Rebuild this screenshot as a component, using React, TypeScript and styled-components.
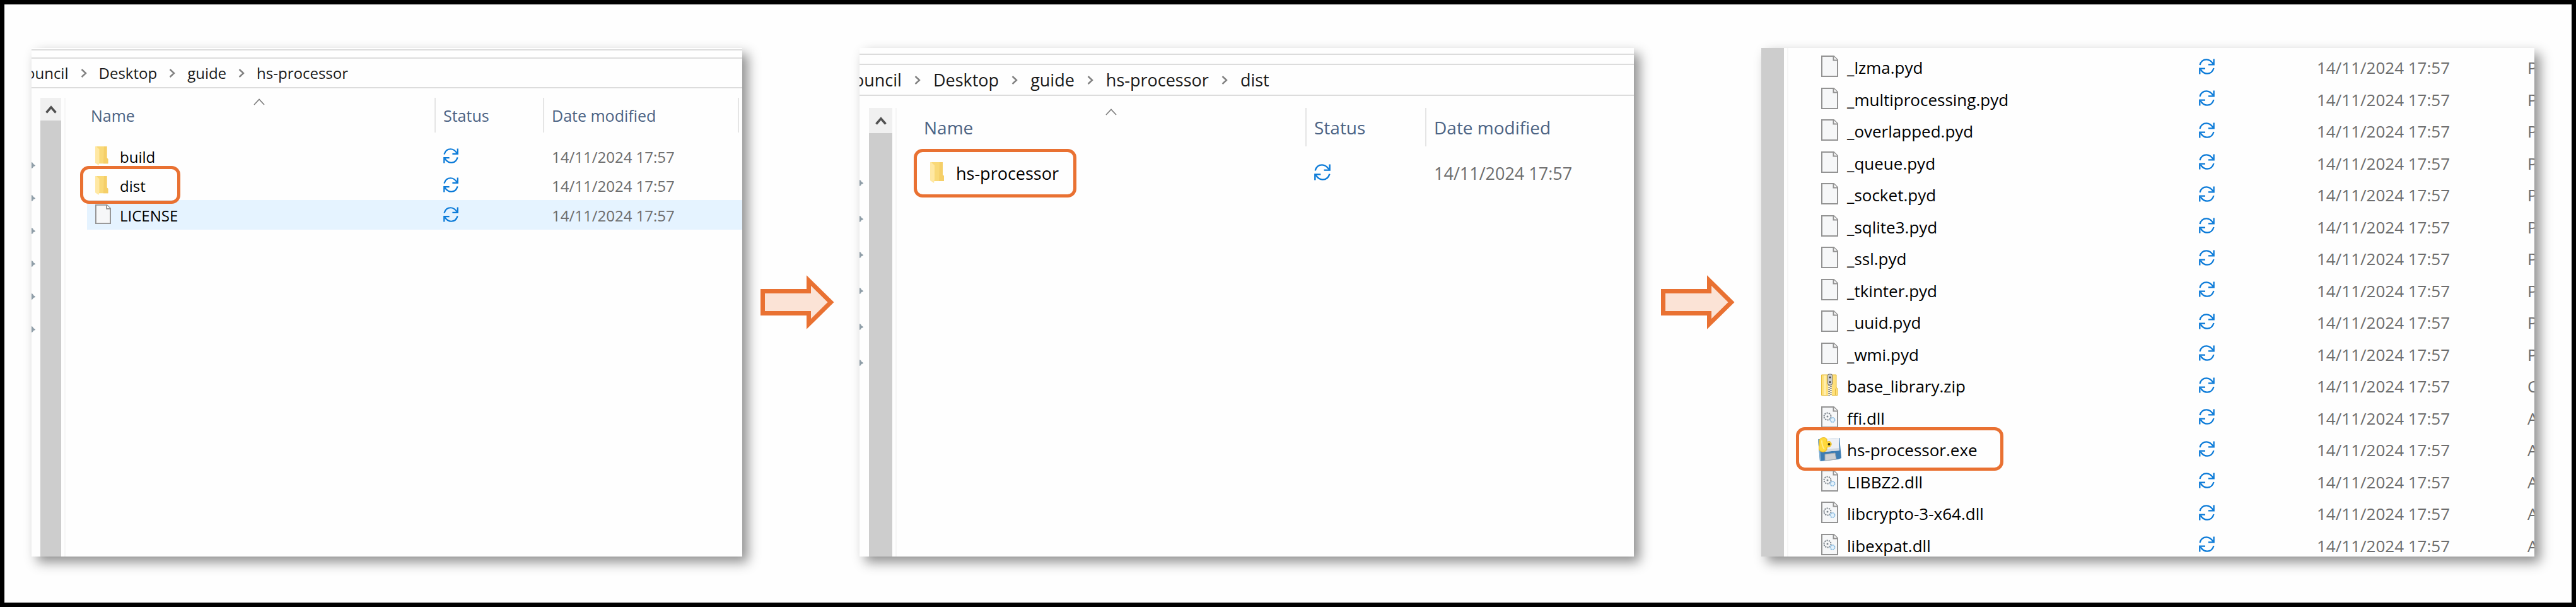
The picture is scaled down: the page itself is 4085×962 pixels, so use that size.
import React from "react";
import styled, { createGlobalStyle } from "styled-components";

const GlobalStyle = createGlobalStyle`
  *, *::before, *::after { box-sizing: border-box; }
  body {
    margin: 0;
    background: #fff;
    font-family: "Open Sans", "Noto Sans", sans-serif;
  }
`;

const Frame = styled.main`
  display: grid;
  grid-template-columns: minmax(0, 1127fr) 186px minmax(0, 1228fr) 202px minmax(0, 1226fr);
  grid-template-rows: minmax(0, 1fr);
  height: 100vh;
  padding: 69px 59px 73px 43px;
  border: 7px solid #000;
  background: #fefefe;
`;

const Panel = styled.section<{ $size: number }>`
  display: flex;
  flex-direction: column;
  min-width: 0;
  overflow: hidden;
  background: #fefefe;
  box-shadow: 9px 9px 18px rgba(0, 0, 0, 0.44);
  font-size: ${(p) => p.$size}px;
  line-height: 34px;
`;

const TopEdge = styled.div<{ $before: number; $height: number }>`
  flex: none;
  height: ${(p) => p.$height}px;
  margin-top: ${(p) => p.$before}px;
  border-top: 2px solid #dcdcdc;
`;

const AddressBar = styled.nav<{ $height: number; $gap: number }>`
  flex: none;
  display: flex;
  align-items: center;
  gap: ${(p) => p.$gap}px;
  height: ${(p) => p.$height}px;
  padding-right: 20px;
  border-top: 2px solid #dcdcdc;
  border-bottom: 2px solid #dcdcdc;
  white-space: nowrap;
`;

const Crumb = styled.a`
  color: #1a1a1a;
  text-decoration: none;

  &:first-child {
    margin-left: -9px;
  }
`;

const Body = styled.div<{ $top: number }>`
  flex: 1;
  display: flex;
  min-height: 0;
  padding-top: ${(p) => p.$top}px;
`;

const PinStrip = styled.div<{ $width: number; $top: number; $gap: number }>`
  flex: none;
  display: flex;
  flex-direction: column;
  gap: ${(p) => p.$gap}px;
  width: ${(p) => p.$width}px;
  padding-top: ${(p) => p.$top}px;
`;

const ScrollTrack = styled.div<{ $width: number }>`
  flex: none;
  display: flex;
  flex-direction: column;
  width: ${(p) => p.$width}px;
  background: #f0f0f0;
`;

const ScrollButton = styled.button<{ $height: number }>`
  display: flex;
  align-items: center;
  justify-content: center;
  height: ${(p) => p.$height}px;
  padding: 0;
  border: 0;
  background: #f0f0f0;
`;

const ScrollThumb = styled.div`
  flex: 1;
  background: #cdcdcd;
`;

const Divider = styled.div<{ $after: number }>`
  flex: none;
  width: 2px;
  margin: 0 ${(p) => p.$after}px 0 5px;
  background: #f6f6f6;
`;

const ListArea = styled.div<{ $top: number }>`
  flex: 1;
  min-width: 0;
  padding-top: ${(p) => p.$top}px;
`;

const FileTable = styled.table<{ $gap: number; $odd: number; $even: number }>`
  width: 100%;
  table-layout: fixed;
  border-collapse: separate;
  border-spacing: 0;
  white-space: nowrap;

  thead + tbody::before {
    content: "";
    display: block;
    height: ${(p) => p.$gap}px;
  }
  tbody tr:nth-child(odd) {
    height: ${(p) => p.$odd}px;
  }
  tbody tr:nth-child(even) {
    height: ${(p) => p.$even}px;
  }
`;

const Column = styled.col<{ $width?: number }>`
  width: ${(p) => (p.$width ? `${p.$width}px` : "auto")};
`;

const HeadCell = styled.th<{ $height: number; $size: number }>`
  position: relative;
  height: ${(p) => p.$height}px;
  padding: 0 0 0 12px;
  border-left: 2px solid #e5e5e5;
  color: #4c6384;
  font-size: ${(p) => p.$size}px;
  font-weight: 400;
  text-align: left;

  &:first-child {
    border-left-color: transparent;
  }
`;

const SortMark = styled.span`
  position: absolute;
  top: 1px;
  left: 50%;
  display: flex;
  transform: translateX(-50%);
`;

const Row = styled.tr<{ $hot?: boolean }>`
  td {
    background-color: ${(p) => (p.$hot ? "#e5f3ff" : "transparent")};
  }
`;

const Cell = styled.td`
  padding: 2px 0 0 14px;
  color: #6d6d6d;
`;

const NameCell = styled.td<{ $pad: number }>`
  position: relative;
  padding: 2px 0 0 ${(p) => p.$pad}px;
  border-left: 8px solid transparent;
  background-clip: padding-box;
  color: #000;
`;

const NameLine = styled.div`
  display: flex;
  align-items: center;
  gap: 14px;
`;

const IconSlot = styled.span<{ $width: number; $height: number }>`
  flex: none;
  display: flex;
  width: ${(p) => p.$width}px;
  height: ${(p) => p.$height}px;
  margin-bottom: 4px;

  svg {
    width: 100%;
    height: 100%;
    overflow: visible;
  }
`;

const SyncSlot = styled.span<{ $side: number }>`
  display: flex;
  width: ${(p) => p.$side}px;
  height: ${(p) => p.$side}px;
  margin-bottom: 4px;

  svg {
    width: 100%;
    height: 100%;
  }
`;

const Ring = styled.span<{ $left: number; $top: number; $width: number; $height: number }>`
  position: absolute;
  z-index: 1;
  left: ${(p) => p.$left}px;
  top: ${(p) => p.$top}px;
  width: ${(p) => p.$width}px;
  height: ${(p) => p.$height}px;
  border: 5px solid #e97132;
  border-radius: 14px;
  pointer-events: none;
`;

const ArrowSlot = styled.div<{ $shift: number }>`
  display: flex;
  align-items: center;
  padding-left: ${(p) => p.$shift}px;
`;

type Kind = "folder" | "file" | "zip" | "dll" | "exe";

const Page = () => (
  <>
    <path d="M1 1H20L26 7V33H1Z" fill="#f6f7f8" stroke="#939393" strokeWidth="2" />
    <path d="M19.500 1V7.500H26" fill="#fff" stroke="#939393" strokeWidth="2" />
  </>
);

const FileIcon = ({ kind }: { kind: Kind }) => {
  if (kind === "folder")
    return (
      <svg viewBox="0 0 27 34" preserveAspectRatio="none" aria-hidden="true">
        <path d="M2 1H20V21L22 23V31H6Z" fill="#f9d978" />
        <path d="M15 1H20V21L22 23V31H14Z" fill="#f5cf68" />
        <path d="M0 1H1.500L7 6V28L6 34L0 30Z" fill="#ffe8a3" />
      </svg>
    );
  if (kind === "file")
    return (
      <svg viewBox="0 0 27 34" preserveAspectRatio="none" aria-hidden="true">
        <Page />
      </svg>
    );
  if (kind === "dll")
    return (
      <svg viewBox="0 0 27 34" aria-hidden="true">
        <Page />
        <circle cx="10" cy="16" r="5.500" fill="none" stroke="#7d858c" strokeWidth="2" strokeDasharray="2.200 1.200" />
        <circle cx="10" cy="16" r="1.500" fill="#7d858c" />
        <circle cx="18" cy="21.500" r="3.600" fill="#e4f2fc" stroke="#8dbce0" strokeWidth="1.800" strokeDasharray="2.400 .8" />
      </svg>
    );
  if (kind === "zip")
    return (
      <svg viewBox="0 0 27 34" aria-hidden="true">
        <path d="M.5 1H24V21L26 23V33.500H.5Z" fill="#ffe07a" stroke="#e6bd3c" />
        <path d="M6 2V33" stroke="#fff0b4" strokeWidth="3" />
        <path d="M22.500 33V24L24 22" fill="none" stroke="#e2b73a" />
        <path d="M14 16V34" stroke="#fff6d8" strokeWidth="6" />
        <path d="M12.500 17V34M15.500 18.500V34" stroke="#555" strokeWidth="2" strokeDasharray="1.500 1.700" />
        <rect x="10.500" y="0" width="7" height="17" rx="2" fill="#c9cbcd" stroke="#777" />
        <circle cx="14" cy="5" r="1.500" fill="#333" />
        <circle cx="14" cy="12.500" r="1.500" fill="#333" />
      </svg>
    );
  return (
    <svg viewBox="0 0 27 34" aria-hidden="true">
      <path d="M-5 2L29 0L32 32L27 34L-2 37Z" fill="#3d7db3" />
      <path d="M-5 2L-3 2L0 36L-2 37Z" fill="#79abd1" />
      <path d="M3 1L28 0L29 20L5 22Z" fill="#eef0f4" />
      <path d="M5 18L29 16V20L5 22Z" fill="#d5dae1" />
      <path d="M6 26L22 24L24 34L6 36Z" fill="#cfd1d3" stroke="#9fa7ae" />
      <path
        d="M-3 4C-2 -1 7 -2 9 2V7C12 4 17 6 16 11C15 15 11 14 9 15C10 20 6 23 1 22C-4 21 -4 16 -3 12Z"
        fill="#ffd93b"
        stroke="#e9b71d"
      />
      <path d="M1 4C1 9 2 14 5 18" fill="none" stroke="#ffec8a" strokeWidth="2" />
      <circle cx="12.500" cy="10" r="2" fill="#3a3208" />
    </svg>
  );
};

const SyncIcon = () => (
  <svg viewBox="0 0 25 25" role="img" aria-label="Sync pending" fill="none" stroke="#0a7ad8" strokeWidth="2.300">
    <path d="M1.500 10C3 4.500 7 1.300 12 1.300C16 1.300 19.500 3.500 22.500 8" />
    <path d="M23.700 .5V9.300H15" />
    <path d="M23.500 15C22 20.500 18 23.700 13 23.700C9 23.700 5.500 21.500 2.500 17" />
    <path d="M1.300 24.500V15.700H10" />
  </svg>
);

const CrumbChevron = () => (
  <svg width="10" height="14" viewBox="0 0 10 14" aria-hidden="true">
    <path d="M1.500 1L8 7L1.500 13" fill="none" stroke="#808080" strokeWidth="2.400" />
  </svg>
);

const Pin = () => (
  <svg width="6" height="10" viewBox="0 0 6 10" aria-hidden="true">
    <path d="M0 0L2 1L3 3L6 5V6L3 7L2 9L0 10Z" fill="#8f9ea8" />
  </svg>
);

const BlockArrow = () => (
  <svg width="117" height="88" viewBox="0 0 117 88" role="img" aria-label="Next step">
    <path
      d="M3.500 26.500H76.500V9.500L111.500 44L76.500 78.500V61.500H3.500Z"
      fill="#fbe3d6"
      stroke="#e97132"
      strokeWidth="7"
      strokeMiterlimit="10"
    />
  </svg>
);

type Item = { name: string; kind: Kind; type?: string; hot?: boolean; ringed?: boolean };
type RingBox = { left: number; top: number; width: number; height: number };
type View = {
  label: string;
  size: number;
  address?: { before: number; edge: number; height: number; gap: number; path: string[] };
  bodyTop: number;
  pins?: { width: number; top: number; gap: number };
  scroll: { width: number; button?: number; after: number };
  list: { top: number; head?: number; gap: number; odd: number; even: number; columns: number[] };
  icon: { width: number; height: number; sync: number; pad: number };
  ring: RingBox;
  items: Item[];
};

const STAMP = "14/11/2024 17:57";

const views: View[] = [
  {
    label: "hs-processor folder",
    size: 24,
    address: { before: 2, edge: 13, height: 49, gap: 19, path: ["ouncil", "Desktop", "guide", "hs-processor"] },
    bodyTop: 15,
    pins: { width: 14, top: 102, gap: 42 },
    scroll: { width: 33, button: 36, after: 26 },
    list: { top: 0, head: 55, gap: 14, odd: 47, even: 46, columns: [172, 309, 7] },
    icon: { width: 25, height: 31, sync: 24, pad: 13 },
    ring: { left: -11, top: -8, width: 159, height: 60 },
    items: [
      { name: "build", kind: "folder" },
      { name: "dist", kind: "folder", ringed: true },
      { name: "LICENSE", kind: "file", hot: true },
    ],
  },
  {
    label: "dist folder",
    size: 27,
    address: { before: 9, edge: 16, height: 51, gap: 20, path: ["ouncil", "Desktop", "guide", "hs-processor", "dist"] },
    bodyTop: 19,
    pins: { width: 15, top: 114, gap: 47 },
    scroll: { width: 37, button: 40, after: 29 },
    list: { top: 0, head: 61, gap: 17, odd: 50, even: 51, columns: [190, 331] },
    icon: { width: 27, height: 34, sync: 26, pad: 16 },
    ring: { left: -10, top: -13, width: 258, height: 77 },
    items: [{ name: "hs-processor", kind: "folder", ringed: true }],
  },
  {
    label: "Program files",
    size: 26,
    bodyTop: 0,
    scroll: { width: 36, after: 28 },
    list: { top: 5, gap: 0, odd: 50, even: 51, columns: [187, 334, 25] },
    icon: { width: 27, height: 34, sync: 25, pad: 16 },
    ring: { left: -24, top: -10, width: 329, height: 69 },
    items: [
      { name: "_lzma.pyd", kind: "file", type: "P" },
      { name: "_multiprocessing.pyd", kind: "file", type: "P" },
      { name: "_overlapped.pyd", kind: "file", type: "P" },
      { name: "_queue.pyd", kind: "file", type: "P" },
      { name: "_socket.pyd", kind: "file", type: "P" },
      { name: "_sqlite3.pyd", kind: "file", type: "P" },
      { name: "_ssl.pyd", kind: "file", type: "P" },
      { name: "_tkinter.pyd", kind: "file", type: "P" },
      { name: "_uuid.pyd", kind: "file", type: "P" },
      { name: "_wmi.pyd", kind: "file", type: "P" },
      { name: "base_library.zip", kind: "zip", type: "C" },
      { name: "ffi.dll", kind: "dll", type: "A" },
      { name: "hs-processor.exe", kind: "exe", type: "A", ringed: true },
      { name: "LIBBZ2.dll", kind: "dll", type: "A" },
      { name: "libcrypto-3-x64.dll", kind: "dll", type: "A" },
      { name: "libexpat.dll", kind: "dll", type: "A" },
    ],
  },
];

const Explorer = ({ view }: { view: View }) => {
  const { address, pins, scroll, list, icon, ring } = view;
  const heads = ["Name", "Status", "Date modified", ""];
  const hasTail = list.columns.length > 2;
  return (
    <Panel $size={view.size} aria-label={view.label}>
      {address && (
        <>
          <TopEdge $before={address.before} $height={address.edge} />
          <AddressBar $height={address.height} $gap={address.gap} aria-label="Path">
            {address.path.map((part, i) => (
              <React.Fragment key={part}>
                {i > 0 && <CrumbChevron />}
                <Crumb href="#">{part}</Crumb>
              </React.Fragment>
            ))}
          </AddressBar>
        </>
      )}
      <Body $top={view.bodyTop}>
        {pins && (
          <PinStrip $width={pins.width} $top={pins.top} $gap={pins.gap}>
            {[0, 1, 2, 3, 4, 5].map((n) => (
              <Pin key={n} />
            ))}
          </PinStrip>
        )}
        <ScrollTrack $width={scroll.width}>
          {scroll.button && (
            <ScrollButton $height={scroll.button} type="button" aria-label="Scroll up">
              <svg width="18" height="13" viewBox="0 0 18 13" aria-hidden="true">
                <path d="M1.500 11.500L9 3L16.500 11.500" fill="none" stroke="#505050" strokeWidth="3.500" />
              </svg>
            </ScrollButton>
          )}
          <ScrollThumb />
        </ScrollTrack>
        <Divider $after={scroll.after} />
        <ListArea $top={list.top}>
          <FileTable $gap={list.gap} $odd={list.odd} $even={list.even}>
            <colgroup>
              <Column />
              {list.columns.map((w, i) => (
                <Column key={i} $width={w} />
              ))}
            </colgroup>
            {list.head && (
              <thead>
                <tr>
                  {heads.slice(0, list.columns.length + 1).map((title, i) => (
                    <HeadCell key={title} $height={list.head!} $size={view.size + 1} scope="col">
                      {title}
                      {i === 0 && (
                        <SortMark>
                          <svg width="18" height="11" viewBox="0 0 18 11" aria-hidden="true">
                            <path d="M1 10L9 1.500L17 10" fill="none" stroke="#7a7a7a" strokeWidth="1.600" />
                          </svg>
                        </SortMark>
                      )}
                    </HeadCell>
                  ))}
                </tr>
              </thead>
            )}
            <tbody>
              {view.items.map((item) => (
                <Row key={item.name} $hot={item.hot}>
                  <NameCell $pad={icon.pad}>
                    <NameLine>
                      <IconSlot $width={icon.width} $height={icon.height}>
                        <FileIcon kind={item.kind} />
                      </IconSlot>
                      {item.name}
                    </NameLine>
                    {item.ringed && (
                      <Ring $left={ring.left} $top={ring.top} $width={ring.width} $height={ring.height} />
                    )}
                  </NameCell>
                  <Cell>
                    <SyncSlot $side={icon.sync}>
                      <SyncIcon />
                    </SyncSlot>
                  </Cell>
                  <Cell>{STAMP}</Cell>
                  {hasTail && <Cell>{item.type}</Cell>}
                </Row>
              ))}
            </tbody>
          </FileTable>
        </ListArea>
      </Body>
    </Panel>
  );
};

export default function App() {
  return (
    <>
      <GlobalStyle />
      <Frame>
        <Explorer view={views[0]} />
        <ArrowSlot $shift={29}>
          <BlockArrow />
        </ArrowSlot>
        <Explorer view={views[1]} />
        <ArrowSlot $shift={43}>
          <BlockArrow />
        </ArrowSlot>
        <Explorer view={views[2]} />
      </Frame>
    </>
  );
}
